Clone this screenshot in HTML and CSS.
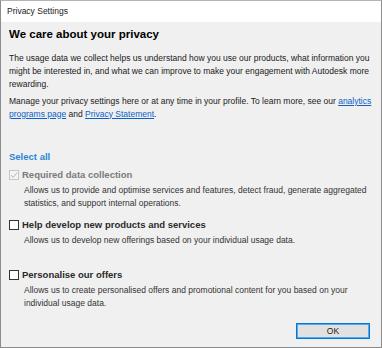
FILE: index.html
```html
<!DOCTYPE html>
<html lang="en">
<head>
<meta charset="utf-8">
<title>Privacy Settings</title>
<link rel="stylesheet" href="styles.css">
</head>
<body>
<div class="window">
  <div class="titlebar">Privacy Settings</div>
  <div class="content">
    <h1 class="heading">We care about your privacy</h1>
    <p class="para">The usage data we collect helps us understand how you use our products, what information you<br>might be interested in, and what we can improve to make your engagement with Autodesk more<br>rewarding.</p>
    <p class="para para-second">Manage your privacy settings here or at any time in your profile. To learn more, see our <a class="link" href="#">analytics</a><br><a class="link" href="#">programs page</a> and <a class="link" href="#">Privacy Statement</a>.</p>
    <a class="select-all" href="#">Select all</a>
    <div class="option option-disabled">
      <div class="option-label"><span class="checkbox checkbox-checked"><svg viewBox="0 0 10 10" width="10" height="10"><path d="M2 5.2 L4.1 7.3 L8.2 2.6" fill="none" stroke="#b5b5b5" stroke-width="1"/></svg></span>Required data collection</div>
      <p class="desc">Allows us to provide and optimise services and features, detect fraud, generate aggregated<br>statistics, and support internal operations.</p>
    </div>
    <div class="option">
      <div class="option-label"><span class="checkbox"></span>Help develop new products and services</div>
      <p class="desc">Allows us to develop new offerings based on your individual usage data.</p>
    </div>
    <div class="option">
      <div class="option-label"><span class="checkbox"></span>Personalise our offers</div>
      <p class="desc">Allows us to create personalised offers and promotional content for you based on your<br>individual usage data.</p>
    </div>
    <div class="footer">
      <button class="btn" type="button">OK</button>
    </div>
  </div>
</div>
</body>
</html>
```
FILE: styles.css
```css
html, body {
  margin: 0;
  padding: 0;
}
body {
  width: 382px;
  height: 348px;
  overflow: hidden;
  font-family: "Liberation Sans", Arial, sans-serif;
  background: #f0f0f0;
}
.window {
  box-sizing: border-box;
  width: 382px;
  height: 348px;
  border: 1px solid #8c8c8c;
  border-top-color: #b4b4b4;
  display: flex;
  flex-direction: column;
  background: #f0f0f0;
}
.titlebar {
  height: 21px;
  background: #ffffff;
  font-size: 8.5px;
  line-height: 21px;
  padding-left: 6px;
  color: #1a1a1a;
  flex: none;
}
.content {
  flex: 1;
  display: flex;
  flex-direction: column;
  padding: 5px 11px 8px 8px;
}
.heading {
  margin: 0;
  font-size: 11.5px;
  line-height: 14px;
  font-weight: bold;
  color: #000;
}
.para {
  margin: 10.5px 0 0;
  font-size: 8.5px;
  line-height: 13px;
  color: #1a1a1a;
  white-space: nowrap;
}
.para-second {
  margin-top: 4px;
}
.link {
  color: #0b62c4;
  text-decoration: underline;
}
.select-all {
  margin-top: 30.5px;
  align-self: flex-start;
  font-size: 9.5px;
  line-height: 12px;
  font-weight: bold;
  color: #2b86d3;
  text-decoration: none;
}
.option {
  margin-top: 6px;
  display: flex;
  flex-direction: column;
}
.option + .option {
  margin-top: 9.5px;
}
.option-label {
  display: flex;
  align-items: center;
  gap: 3px;
  font-size: 9.5px;
  line-height: 12px;
  font-weight: bold;
  color: #2a2a2a;
}
.option-disabled .option-label {
  color: #7a7a7a;
}
.checkbox {
  box-sizing: border-box;
  width: 10px;
  height: 10px;
  border: 1px solid #333;
  background: #fff;
  display: inline-flex;
  align-items: center;
  justify-content: center;
  flex: none;
}
.checkbox-checked {
  border-color: #c6c6c6;
  background: #f4f4f4;
}
.checkbox svg {
  display: block;
  margin: -1px;
}
.desc {
  margin: 2.5px 0 0 15px;
  min-height: 26px;
  font-size: 8.5px;
  line-height: 13px;
  color: #333;
  white-space: nowrap;
}
.footer {
  margin-top: auto;
  display: flex;
  justify-content: flex-end;
}
.btn {
  box-sizing: border-box;
  width: 74px;
  height: 16px;
  padding: 0;
  border: 1px solid #0078d7;
  box-shadow: inset 0 0 0 1px #5aa6e6;
  background: #e1e1e1;
  font-family: "Liberation Sans", Arial, sans-serif;
  font-size: 8.5px;
  color: #1a1a1a;
}
```
